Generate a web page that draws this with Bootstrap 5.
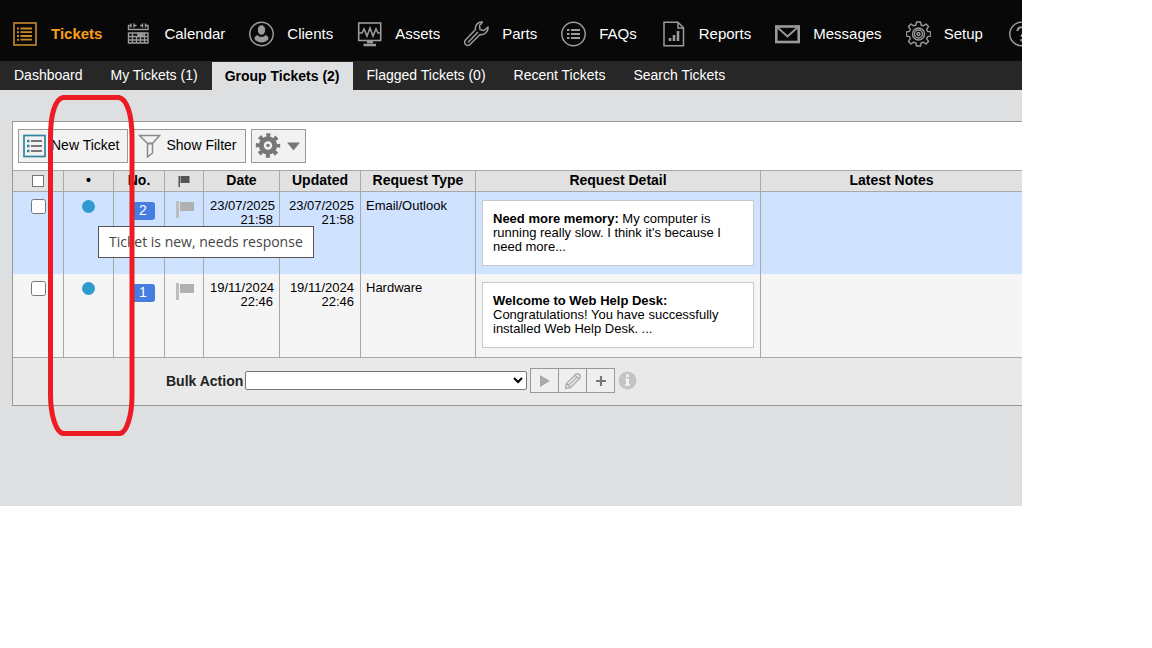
<!DOCTYPE html>
<html lang="en">
<head>
<meta charset="utf-8">
<meta name="viewport" content="width=device-width, initial-scale=1">
<title>Web Help Desk - Group Tickets</title>
<link href="https://cdn.jsdelivr.net/npm/bootstrap@5.3.0/dist/css/bootstrap.min.css" rel="stylesheet">
<style>
  body { font-family: "Liberation Sans", Arial, sans-serif; font-size: 13px; line-height: 14px; color: #000; background: #fff; }
  .app-shell { margin-right: 130px; padding-bottom: 100px; background: #dedfe1; }
  .main-nav { background: #080808; height: 61px; padding: 7px 0 0 13px; gap: 24px; font-size: 15px; }
  .main-nav a { color: #fff; gap: 13px; line-height: 20px; }
  .main-nav a.current { color: #f99d1c; font-weight: bold; }
  .main-nav svg { width: 25px; height: 26px; color: #9b9b9b; }
  .main-nav a.current svg { color: #c98a2c; }
  .sub-nav { background: #272727; height: 29px; font-size: 14px; }
  .sub-nav a { color: #fff; padding: 0 14px; line-height: 28px; }
  .sub-nav a.current { background: #dedfe1; color: #000; font-weight: bold; padding: 0 13px; margin-top: 1px; }
  .panel { margin: 31px 0 0 12px; border: 1px solid #999; border-right: 0; background: #fff; }
  .tools { padding: 7px 5px; gap: 5px; }
  .tool-btn { height: 34px; border: 1px solid #999; background: #f2f2f2; color: #000; font-size: 14px; gap: 5px; padding: 0 8px 0 4px; }
  .tool-btn span { padding-bottom: 2px; }
  .tool-btn.options { padding: 0 3px; }
  .tickets { table-layout: fixed; border-collapse: separate; border-spacing: 0; }
  .tickets th { height: 22px; padding: 0 0 2px; background: #e1e1e1; border: solid #a8a8a8; border-width: 1px 0 1px 1px; font-size: 14px; text-align: center; }
  .tickets td { height: 83px; padding: 7px 6px; background: #f5f5f5; border-left: 1px solid #a8a8a8; vertical-align: top; }
  .tickets tr.picked td { background: #cfe2ff; height: 82px; }
  .tickets th:first-child, .tickets td:first-child { border-left: 0; }
  .tickets input { width: 15px; height: 15px; margin: 0; }
  .tickets th input { appearance: none; width: 12px; height: 12px; border: 1px solid #767676; background: #fff; }
  .tickets th input, .tickets th svg { position: static; margin-top: 2px; }
  .tickets td.ticket-type { padding-left: 5px; }
  .c-check, .c-state { width: 50px; } .c-no { width: 51px; } .c-flag { width: 39px; }
  .c-date { width: 76px; } .c-upd { width: 81px; } .c-type { width: 115px; } .c-detail { width: 285px; }
  .state-dot { width: 13px; height: 13px; background: #2e9ad0; margin-top: 1px; }
  .ticket-no { width: 24px; height: 18px; line-height: 17px; font-size: 14px; border-radius: 3px; background: #457de0; color: #fff; margin: 3px 3px 0 0; }
  .flag-mark { margin: 2px 0 0 4px; }
  .excerpt { border: 1px solid #c8c8c8; background: #fff; padding: 11px 10px; margin-top: 1px; }
  .bulk { background: #e9e9e9; border-top: 1px solid #a8a8a8; height: 48px; padding: 0 0 2px 153px; color: #222; }
  .bulk label { font-size: 14px; font-weight: bold; margin-right: 2px; }
  .bulk select { width: 282px; height: 19px; padding-right: 4px; border: 1px solid #767676; border-radius: 2px; background: #fff; margin-right: 3px; }
  .bulk button { width: 29px; height: 25px; border: 1px solid #999; background: #efefef; margin-right: -1px; }
  .hint { left: 98px; top: 226px; height: 32px; padding: 0 10px; border: 1px solid #555; background: #fff; color: #444; font: 14px/30px "Open Sans", "Noto Sans", sans-serif; white-space: nowrap; }
  .marker { left: 48px; top: 95px; }
</style>
</head>
<body>
<div class="app-shell position-relative overflow-hidden">
  <nav class="main-nav d-flex align-items-center overflow-hidden" aria-label="Main">
    <a class="current d-flex align-items-center text-decoration-none" href="#">
      <svg viewBox="1 0 25 26" fill="none" stroke="currentColor"><rect x="2" y="2" width="22" height="22" stroke-width="1.6"/><path d="M8.500 7.500H20M8.500 11.200H20M8.500 15H20M8.500 18.700H20" stroke-width="1.800"/><path d="M5 7.500h2M5 11.200h2M5 15h2M5 18.700h2" stroke-width="2"/></svg>Tickets</a>
    <a class="d-flex align-items-center text-decoration-none" href="#">
      <svg viewBox="0 0 25 26" fill="none" stroke="currentColor" stroke-width="1.400"><path d="M5 4.500H2.500v4h19.500v-4h-2.500M8 4.500h2.500M14 4.500h2.500M5 2.500v4M8 2.500v4M16.500 2.500v4M19.500 2.500v4"/><path d="M2.500 12h19.500v10H2.500zM2.500 15.500H22M2.500 19H22M6.500 12v10M10.500 16v6M14.500 16v6M18.500 12v10"/><path d="M12 12.500h5v3h-5z" fill="currentColor"/></svg>Calendar</a>
    <a class="d-flex align-items-center text-decoration-none" href="#">
      <svg viewBox="0 0 25 26" fill="none" stroke="currentColor"><circle cx="12.500" cy="13" r="11.700" stroke-width="1.500"/><ellipse cx="12.500" cy="9" rx="3.700" ry="4.800" fill="currentColor" stroke="none"/><path d="M8.500 14c-2 .8-3 2-3 4 3 4.500 11 4.500 14 0 0-2-1-3.200-3-4-1.500 2.500-6.500 2.500-8 0z" fill="currentColor" stroke="none"/></svg>Clients</a>
    <a class="d-flex align-items-center text-decoration-none" href="#">
      <svg viewBox="0 0 25 26" fill="none" stroke="currentColor" stroke-width="1.600"><rect x="1.700" y="2" width="22" height="17.500"/><path d="M2 12h3l2-4 3 7 3-8 3 8 3-7 2 4h3"/><path d="M10 21h6M6.500 24h12.500" stroke-width="2.500"/></svg>Assets</a>
    <a class="d-flex align-items-center text-decoration-none" href="#">
      <svg viewBox="0 0 25 26" fill="none" stroke="currentColor" stroke-width="1.500" stroke-linejoin="round"><path d="M18.500 1c-4-.5-8 3-7 7.500L1.500 19c-2.500 3 1.500 7.500 4.500 4.500L16 13.500c4.500 1 8.500-3 8-7.500l-4 3.500-4-1-.5-4z"/><path d="M4 21.500l10-10.500"/></svg>Parts</a>
    <a class="d-flex align-items-center text-decoration-none" href="#">
      <svg viewBox="0 0 25 26" fill="none" stroke="currentColor"><circle cx="12.500" cy="13" r="11.700" stroke-width="1.500"/><path d="M10 9h9M10 13h9M10 17h9M6 9h2.500M6 13h2.500M6 17h2.500" stroke-width="2.200"/></svg>FAQs</a>
    <a class="d-flex align-items-center text-decoration-none" href="#">
      <svg viewBox="0 0 25 26" fill="none" stroke="currentColor" stroke-width="1.500"><path d="M3 1.200h14l5.500 5.500v18H3zM17 1.500v5.500h5.500"/><path d="M9 20v-3M13 20v-6M17 20V10" stroke-width="2.600"/></svg>Reports</a>
    <a class="d-flex align-items-center text-decoration-none" href="#">
      <svg viewBox="0 0 25 26" fill="none" stroke="currentColor" stroke-width="2.600"><rect x="1.300" y="5.500" width="22.400" height="15.500"/><path d="M2 6l10.500 9.500L23 6" stroke-width="1.800"/></svg>Messages</a>
    <a class="d-flex align-items-center text-decoration-none" href="#">
      <svg viewBox="0 0 25 26" fill="none" stroke="currentColor" stroke-width="1.400" stroke-linejoin="round"><path d="M10.500 1h4l.6 3 2.200.9 2.700-1.900 2.500 2.600-1.800 2.600.9 2.200 3.100.6v4l-3.100.6-.9 2.200 1.800 2.600-2.500 2.600-2.700-1.900-2.200.9-.6 3h-4l-.6-3-2.200-.9-2.700 1.900-2.500-2.600 1.800-2.600-.9-2.200-3.100-.6v-4l3.100-.6.9-2.200L2.500 5.600 5 3l2.700 1.900L9.900 4z"/><circle cx="12.500" cy="13" r="6"/><circle cx="12.500" cy="13" r="4"/><circle cx="12.500" cy="13" r="1.500"/></svg>Setup</a>
    <a class="d-flex align-items-center text-decoration-none" href="#" aria-label="Help">
      <svg viewBox="-2 0 25 26" fill="none" stroke="currentColor"><circle cx="12.500" cy="13" r="11.700" stroke-width="1.500"/><path d="M8.500 10c0-5 8-5 8 0 0 2.500-4 2.500-4 6M12.500 18v2.500" stroke-width="2.200"/></svg></a>
  </nav>
  <nav class="sub-nav d-flex overflow-hidden text-nowrap" aria-label="Tickets">
    <a class="text-decoration-none" href="#">Dashboard</a>
    <a class="text-decoration-none" href="#">My Tickets (1)</a>
    <a class="current text-decoration-none" href="#">Group Tickets (2)</a>
    <a class="text-decoration-none" href="#">Flagged Tickets (0)</a>
    <a class="text-decoration-none" href="#">Recent Tickets</a>
    <a class="text-decoration-none" href="#">Search Tickets</a>
  </nav>

  <main class="panel">
    <div class="tools d-flex">
      <button type="button" class="tool-btn d-flex align-items-center"><svg width="23" height="24" viewBox="0 0 23 24" fill="none" stroke="#3185a0"><rect x="1" y="1.500" width="21" height="21" stroke-width="1.700"/><path d="M4 7h2.500M4 12h2.500M4 17h2.500" stroke-width="2.500"/><path d="M8 7h11M8 12h11M8 17h11" stroke="#777" stroke-width="2"/></svg><span>New Ticket</span></button>
      <button type="button" class="tool-btn d-flex align-items-center"><svg width="23" height="24" viewBox="1 0 23 24" fill="none" stroke="#8a8a8a" stroke-width="1.500"><path d="M2.500 1.500h20l-7 8v9.500l-5 4V9.500z"/><path d="M10 9.500h6" stroke-width="2"/></svg><span>Show Filter</span></button>
      <button type="button" class="tool-btn options d-flex align-items-center" aria-label="Options"><svg width="47" height="26" viewBox="0 0 47 26"><g fill="none" stroke="#777"><circle cx="13" cy="12.500" r="6.700" stroke-width="5"/><circle cx="13" cy="12.500" r="10" stroke-width="4.500" stroke-dasharray="3.927" stroke-dashoffset="1.960"/><circle cx="13" cy="12.500" r="1.800" fill="#777" stroke="none"/></g><path d="M32 9.500h13l-6.500 8z" fill="#777"/></svg></button>
    </div>

    <table class="tickets w-100">
      <colgroup><col class="c-check"><col class="c-state"><col class="c-no"><col class="c-flag"><col class="c-date"><col class="c-upd"><col class="c-type"><col class="c-detail"><col></colgroup>
      <thead>
        <tr>
          <th><input type="checkbox" class="d-block mx-auto" aria-label="Select all tickets"></th>
          <th>•</th><th>No.</th>
          <th aria-label="Flag"><svg class="d-block mx-auto" width="12" height="12" viewBox="0 0 12 12"><path d="M.5 1H2v11H.5zM2.500 1h9v7h-9z" fill="#555"/></svg></th>
          <th>Date</th><th>Updated</th><th>Request Type</th><th>Request Detail</th><th>Latest Notes</th>
        </tr>
      </thead>
      <tbody>
        <tr class="picked">
          <td><input type="checkbox" class="d-block mx-auto" aria-label="Select ticket 2"></td>
          <td><div class="state-dot rounded-circle mx-auto"></div></td>
          <td><a href="#" class="ticket-no d-block ms-auto text-center text-decoration-none">2</a></td>
          <td><svg class="flag-mark d-block" width="19" height="18" viewBox="0 0 19 18"><path d="M1 0h3v17H1z" fill="#bdbdbd"/><path d="M5 1h14v9H5z" fill="#b1b1b1"/></svg></td>
          <td class="text-end">23/07/2025 21:58</td>
          <td class="text-end">23/07/2025 21:58</td>
          <td class="ticket-type">Email/Outlook</td>
          <td><div class="excerpt"><strong>Need more memory:</strong> My computer is running really slow. I think it's because I need more...</div></td>
          <td></td>
        </tr>
        <tr>
          <td><input type="checkbox" class="d-block mx-auto" aria-label="Select ticket 1"></td>
          <td><div class="state-dot rounded-circle mx-auto"></div></td>
          <td><a href="#" class="ticket-no d-block ms-auto text-center text-decoration-none">1</a></td>
          <td><svg class="flag-mark d-block" width="19" height="18" viewBox="0 0 19 18"><path d="M1 0h3v17H1z" fill="#bdbdbd"/><path d="M5 1h14v9H5z" fill="#b1b1b1"/></svg></td>
          <td class="text-end">19/11/2024 22:46</td>
          <td class="text-end">19/11/2024 22:46</td>
          <td class="ticket-type">Hardware</td>
          <td><div class="excerpt"><strong>Welcome to Web Help Desk:</strong> Congratulations! You have successfully installed Web Help Desk. ...</div></td>
          <td></td>
        </tr>
      </tbody>
    </table>

    <div class="bulk d-flex align-items-center">
      <label for="bulk-action">Bulk Action</label>
      <select id="bulk-action"><option></option></select>
      <button type="button" class="p-0 d-flex align-items-center justify-content-center" aria-label="Run"><svg width="12" height="14" viewBox="0 0 12 14"><path d="M1 1l10 6-10 6z" fill="#aaa"/></svg></button>
      <button type="button" class="p-0 d-flex align-items-center justify-content-center" aria-label="Edit"><svg width="18" height="18" viewBox="0 0 18 18" fill="none" stroke="#b0b0b0" stroke-width="1.500" stroke-linejoin="round"><path d="M1.500 16.500l1-5L11 3c3-3.500 7 .5 4 4l-8.500 8.500zM2.500 11.500l4 4M11 3l4 4M5 13l7.500-7.500"/></svg></button>
      <button type="button" class="p-0 d-flex align-items-center justify-content-center" aria-label="Add"><svg width="12" height="12" viewBox="0 0 12 12"><path d="M6 1v10M1 6h10" stroke="#777" stroke-width="2.200"/></svg></button>
      <svg class="ms-1" width="19" height="19" viewBox="0 0 19 19"><circle cx="9.500" cy="9.500" r="9" fill="#c4c4c4"/><path d="M8 3.500h3V6H8zM7 7.500h4V13h1v1.700H7V13h1V9H7z" fill="#f2f2f2"/></svg>
    </div>
  </main>

  <div class="hint position-absolute" role="tooltip">Ticket is new, needs response</div>
  <svg class="marker position-absolute pe-none" width="87" height="342" viewBox="0 0 87 342" fill="none" stroke="#ed1c24" stroke-width="5" aria-hidden="true"><path d="M15 2.500H71C79 4 84 20 84 42V300C84 320 79 337 72 338.500H15C8 337 2.500 320 2.500 300V42C2.500 20 7 4 15 2.500z"/></svg>
</div>
<script src="https://cdn.jsdelivr.net/npm/bootstrap@5.3.0/dist/js/bootstrap.bundle.min.js"></script>
</body>
</html>
